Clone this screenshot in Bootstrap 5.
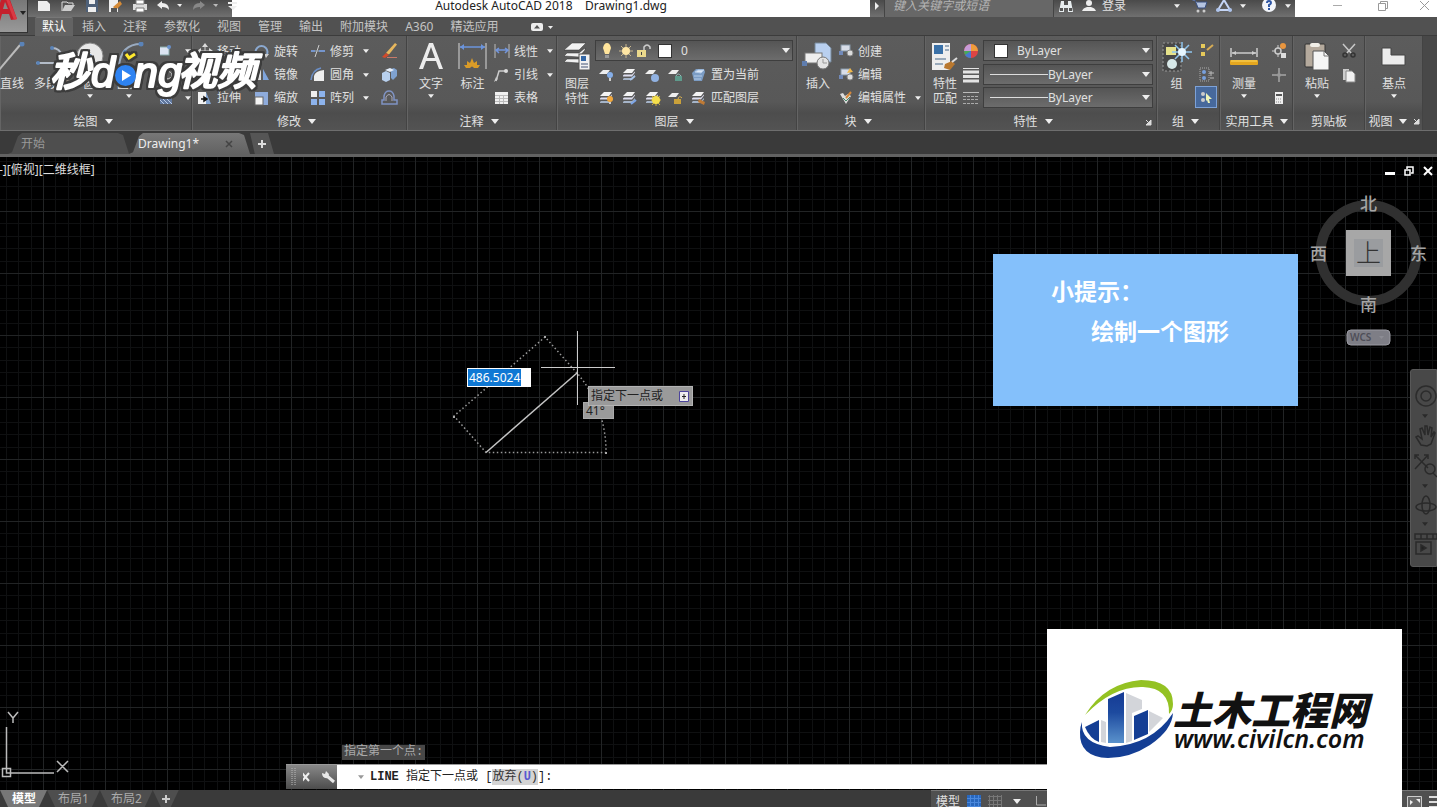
<!DOCTYPE html>
<html lang="zh-CN">
<head>
<meta charset="utf-8">
<meta name="viewport" content="width=device-width, initial-scale=1">
<title>Autodesk AutoCAD 2018 - Drawing1.dwg</title>
<link href="https://cdn.jsdelivr.net/npm/bootstrap@5.3.0/dist/css/bootstrap.min.css" rel="stylesheet">
<style>
:root { --ink:#e0e0e0; --deep:#3a3a3a; }
body { font:12px/16px "Noto Sans","Noto Sans CJK SC",sans-serif; background:#000; color:var(--ink); }
svg { display:block; flex:none; }
svg text { font-family:"Noto Sans","Noto Sans CJK SC",sans-serif; }
.i16 { width:16px; height:16px; }
.i32 { width:32px; height:32px; }
.caret { width:8px; height:5px; fill:#eee; }
.caret.sm { width:6px; height:4px; }
button { color:inherit; }
a { color:inherit; text-decoration:none; }

/* title bar */
.titlebar { height:17px; background:#fff; }
.appbtn { width:28px; height:33px; z-index:3; background:linear-gradient(#777,#999); border:0; border-right:1px solid #333; border-bottom:1px solid #333; }
.chrome { background:linear-gradient(#4a4a4a,#707070); padding-bottom:5px; }
.quick { width:232px; padding-left:36px; gap:10px; }
.doctitle { color:#222; font-size:12px; line-height:12px; }
.finder { width:170px; height:17px; border:1px solid #444; border-width:0 1px; background:#676767; color:#bbb; font-style:italic; padding:0 8px 6px; border-radius:0; }
.finder::placeholder { color:#b4b4b4; opacity:1; }
.info { width:241px; }
.signin { margin-left:-2px; line-height:12px; }
.winctl { width:142px; padding:0 3px 0 33px; }

/* ribbon tabs */
.ribbontabs { height:19px; padding-left:35px; gap:1px; background:#515151; border-bottom:1px solid #3c3c3c; }
.ribbontabs a { padding:1px 8px; color:#c4c4c4; height:19px; line-height:18px; }
.ribbontabs a.active { padding:0 7px; background:#636363; border-radius:2px 2px 0 0; color:#fff; border-top:1px solid #777; }

/* ribbon */
.ribbon { height:95px; background:#484848; border-bottom:1px solid #6e6e6e; }
.pane { background:linear-gradient(#5c5c5c,#585858 70%,#4d4d4d 82%,#535353); border-right:1px solid #434343; border-left:1px solid #646464; padding-top:3px; }
.tools { display:grid; grid-auto-flow:column; grid-template-rows:24px 23px 23px; height:70px; }
.cap { height:24px; line-height:22px; gap:7px; padding:1px 6px 0 0; }
.tool { display:flex; align-items:center; gap:4px; padding:0; border:0; border-radius:0; background:none; color:var(--ink); font-size:12px; line-height:15px; white-space:nowrap; }
.tool:hover { color:#fff; background:#6b6b6b; }
.tool .caret { margin-left:5px; }
.tool.big { grid-row:1 / span 3; flex-direction:column; gap:2px; padding-top:3px; }
.tool.big .caret { margin:1px 0 0; }
.tool.on { width:22px; height:22px; justify-content:center; background:#47699c; border:1px solid #7da2d8; }
.p-draw { width:192px; } .p-draw .tools { grid-template-columns:22px 58px 17px 62px 34px; }
.p-mod { width:215px; } .p-mod .tools { grid-template-columns:57px 56px 71px 20px; padding-left:4px; }
.p-ann { width:150px; } .p-ann .tools { grid-template-columns:40px 43px 60px; padding-left:3px; }
.p-lay { width:240px; } .p-lay .tools { grid-template-columns:36px 198px; padding-left:1px; }
.p-blk { width:128px; } .p-blk .tools { grid-template-columns:40px 84px; }
.p-prop { width:232px; } .p-prop .tools { grid-template-columns:36px 20px 170px; padding-left:1px; }
.p-grp { width:63px; } .p-grp .tools { grid-template-columns:37px 22px; }
.p-util { width:73px; } .p-util .tools { grid-template-columns:46px 20px; }
.p-clip { width:72px; } .p-clip .tools { grid-template-columns:46px 20px; }
.p-view { width:58px; } .p-view .tools { grid-template-columns:56px; }
.p-util .cap, .p-clip .cap, .p-view .cap { padding-right:0; gap:6px; }
.combo { height:21px; margin-top:1px; padding:0 2px 0 10px; gap:9px; border:1px solid #3e3e3e; background:linear-gradient(#555,#6c6c6c); }
.combo select { appearance:none; background:none; border:0; padding:0; color:var(--ink); font-size:12px; line-height:16px; min-width:0; }
.lampset { gap:2px; }
.swatch { width:14px; height:14px; background:#fff; border:1px solid #333; flex:none; }
.rule { height:1px; width:58px; background:#ddd; flex:none; }
.combo.line { gap:0; padding-left:6px; }
.iconrow { gap:7px; padding-left:4px; }

/* file tabs */
.filetabs { height:26px; padding:2px 0 0 8px; background:var(--deep); border-bottom:3px solid #626262; }
.ftab { height:21px; width:121px; padding-left:13px; line-height:21px; background:#4e4e4e; color:#999; clip-path:polygon(0 100%,4px 92%,10px 15%,14px 0,110px 0,115px 10%,100% 100%); }
.ftab.active { background:linear-gradient(#777,#626262); color:#eee; padding:0 17px 0 9px; }
.ftab.add { width:24px; padding:0; border:0; background:#555; color:#ddd; clip-path:polygon(0 0,75% 0,100% 100%,20% 100%); }

/* drawing area */
.stage { min-height:0; background:#000; overflow:hidden; }
.over { position:absolute; }
.vplabel { left:-1px; top:5px; color:#ddd; }
.vpctl { right:4px; top:9px; gap:9px; }
.tipcard { left:993px; top:97px; width:305px; height:152px; background:#84c0fb; color:#fff; font-weight:700; font-size:23px; line-height:40px; padding:17px 0 0 58px; }
.tipcard p { margin:0; }
.tipcard p + p { padding-left:40px; }
.dyn { left:467px; top:211px; width:64px; height:19px; border:1px solid #fff; padding:0 1px; font-size:12px; color:#fff; border-radius:0; background:linear-gradient(90deg,#0f78d4 53px,#fff 53px); }
.hint { left:588px; top:229px; height:20px; width:105px; padding:0 3px 0 2px; background:#9a9a9a; border:1px solid #b4b4b4; color:#222; }
.angle { left:583px; top:245px; width:31px; height:17px; padding-left:2px; line-height:15px; background:#9a9a9a; border:1px solid #aaa; color:#222; }
.cube { right:0; top:33px; }
.navrail { right:0; top:212px; width:27px; height:198px; padding:14px 0 10px 3px; background:#484848; border:1px solid #585858; border-radius:3px 0 0 3px; }
.history { left:342px; bottom:30px; height:15px; line-height:15px; padding:0 2px; background:#474747; color:#aaa; font-family:"Liberation Mono","Noto Sans CJK SC",monospace; }
.cmd { left:286px; right:200px; bottom:1px; height:25px; background:#fff; border-top:1px solid #999; color:#222; }
.cmd .grip { width:51px; background:linear-gradient(#888,#4c4c4c); padding-left:5px; gap:6px; }
.cmd .line { font-size:12px; font-family:"Liberation Mono","Noto Sans CJK SC",monospace; padding-left:21px; gap:6px; }
.cmd .opt { background:#d4d4d4; border:0; padding:0; line-height:16px; font-family:inherit; color:#333; }
.key { color:#5a5ad0; }
.brand { right:35px; bottom:0; width:355px; height:178px; background:#fff; z-index:5; }
.watermark { left:46px; top:44px; z-index:4; pointer-events:none; filter:drop-shadow(2px 0 0 #3c3c3c) drop-shadow(-2px 0 0 #3c3c3c) drop-shadow(0 2px 0 #3c3c3c) drop-shadow(0 -2px 0 #3c3c3c); }
.watermark .latin { font-family:"Liberation Sans",sans-serif; }

/* bottom bar */
.bottombar { height:17px; background:var(--deep); overflow:hidden; }
.ltab { height:17px; padding:0 11px; background:#4e4e4e; color:#aaa; border:0; line-height:17px; clip-path:polygon(0 0,100% 0,calc(100% - 8px) 100%,8px 100%); }
.ltab.active { background:#777; color:#fff; font-weight:700; padding:0 11px 0 12px; }
.ltab.plus { padding:0 8px; }
.status { width:506px; background:#505050; border-top:1px solid #777; padding:5px 0 0 5px; gap:7px; }
</style>
</head>
<body class="vh-100 d-flex flex-column overflow-hidden">
<svg width="0" height="0" class="position-absolute" aria-hidden="true">
  <defs>
    <symbol id="car" viewBox="0 0 8 5"><path d="M0 0h8L4 5z"/></symbol>
    <symbol id="sheets" viewBox="0 0 16 16"><path d="M1 6l4-4h8l-3 4z" fill="#f4f4f4"/><path d="M1 8.500l1-1h8l3-3v1L10 9.500H1z" fill="#dde"/><path d="M1 12l1-1h8l3-3v1.500L10 13H1z" fill="#a5b4c8"/></symbol>
    <symbol id="sheet" viewBox="0 0 16 16"><path d="M0 7l4-4h7l-3 4z" fill="#eee"/></symbol>
    <symbol id="block" viewBox="0 0 16 16"><rect x="3" y="2" width="9" height="6" fill="#d8dde8" stroke="#8899aa"/><rect x="1" y="8" width="4" height="4" fill="#7189b8"/><circle cx="12" cy="10" r="3" fill="#ddd" stroke="#888"/></symbol>
    <linearGradient id="tower" x1="0" y1="0" x2="0" y2="1"><stop offset="0" stop-color="#153a94"/><stop offset=".4" stop-color="#1d4a9f"/><stop offset="1" stop-color="#5a92cc"/></linearGradient>
  </defs>
</svg>

<header class="position-relative">
  <button class="appbtn position-absolute top-0 start-0 p-0" aria-label="应用程序菜单">
    <svg width="28" height="32" viewBox="0 0 28 32"><path d="M-6 21L2-3h7l8 22-6 1-2-6H2l-2 7z" fill="#c4202c"/><path d="M3 9l2-7 3 7z" fill="#888"/><path d="M9-1l8 20-3 1L6-1z" fill="#d93a44"/><path d="M20 11h6l-3 4z" fill="#222"/></svg>
  </button>
  <div class="titlebar d-flex align-items-stretch">
    <div class="chrome quick d-flex align-items-center">
      <svg width="15" height="14" viewBox="0 0 15 14"><path d="M2 2h9l3 3v7H2z" fill="#eee"/></svg>
      <svg width="15" height="14" viewBox="0 0 15 14"><path d="M1 12V3h5l1 1h5v3" fill="none" stroke="#ddd"/><path d="M1 12l3-6h10l-4 6z" fill="#ccc"/></svg>
      <svg width="12" height="14" viewBox="0 0 12 14"><path d="M0 1h12v12H0z" fill="#4e6078"/><path d="M3 1h6v4H3zM2 8h8v5H2z" fill="#eee"/></svg>
      <svg width="15" height="14" viewBox="0 0 15 14"><path d="M1 1h9v12H1z" fill="#eee"/><path d="M5 8l7-6 2 3-6 6z" fill="#d58a36"/><path d="M3 9h6v4H3z" fill="#555"/></svg>
      <svg width="14" height="14" viewBox="0 0 14 14"><path d="M0 5h14v6H0z" fill="#ddd"/><path d="M3 1h8v4H3zM3 9h8v4H3z" fill="#fff" stroke="#777"/></svg>
      <svg width="26" height="14" viewBox="0 0 26 14"><path d="M0 6l5-4v2q7 0 7 7q-2-3-7-3v2z" fill="#eee"/><path d="M20 5h5l-2 3z" fill="#eee"/></svg>
      <svg width="25" height="14" viewBox="0 0 25 14"><path d="M12 6L7 2v2q-7 0-7 7q2-3 7-3v2z" fill="#888"/><path d="M20 5h5l-2 3z" fill="#bbb"/></svg>
      <svg width="9" height="14" viewBox="0 0 9 14"><path d="M0 3h9v2H0zM0 7h9l-4 4z" fill="#eee"/></svg>
    </div>
    <div class="doctitle flex-grow-1 text-center">Autodesk AutoCAD 2018 &nbsp;&nbsp; Drawing1.dwg</div>
    <div class="chrome d-flex align-items-center ps-1"><svg width="10" height="12" viewBox="0 0 10 12"><path d="M1 2l4 4-4 4z" fill="#eee"/></svg></div>
    <input class="finder" type="search" placeholder="键入关键字或短语" aria-label="键入关键字或短语">
    <div class="chrome info d-flex align-items-center ps-1 gap-2">
      <svg width="16" height="14" viewBox="0 0 16 14"><path d="M1 13l2-11h3v11zM15 13L13 2h-3v11zM6 6h4v3H6z" fill="#e8eef0"/><path d="M2 9h3v3H2zM11 9h3v3h-3z" fill="#555"/></svg>
      <svg width="14" height="14" viewBox="0 0 14 14"><circle cx="7" cy="4" r="3" fill="#eee"/><path d="M0 12q1-3 5-4h4q4 1 5 4z" fill="#eee"/></svg>
      <a href="#" class="signin text-nowrap">登录</a>
      <svg class="caret sm ms-auto"><use href="#car"/></svg>
      <svg class="ms-1" width="16" height="14" viewBox="0 0 16 14"><path d="M0 1h3l3 8h7l2-6H5" fill="#b5c4e0" stroke="#384f80"/><circle cx="6" cy="12" r="1.500" fill="#ccc"/><circle cx="12" cy="12" r="1.500" fill="#ccc"/></svg>
      <svg width="16" height="14" viewBox="0 0 16 14"><path d="M8 1l6 10H2z" fill="none" stroke="#c5d5f5" stroke-width="2"/><circle cx="2" cy="11" r="2" fill="#aec4ec"/><circle cx="14" cy="11" r="2" fill="#aec4ec"/></svg>
      <svg class="caret sm"><use href="#car"/></svg>
      <svg class="ms-2" width="15" height="14" viewBox="0 0 15 14"><circle cx="7" cy="6" r="7" fill="#f2f5fa"/><path d="M5 4q0-2 2-2t2 2q0 1-2 2v2M7 9v2" fill="none" stroke="#2e56a5" stroke-width="2"/></svg>
      <svg class="caret sm me-1"><use href="#car"/></svg>
    </div>
    <div class="winctl d-flex justify-content-between align-items-start">
      <svg width="20" height="12" viewBox="0 0 20 12"><path d="M5 5.500h9" stroke="#aaa"/></svg>
      <svg width="12" height="12" viewBox="0 0 12 12"><path d="M1.500 3.500h7v7h-7zM3.500 3V1.500h7v7H9" fill="none" stroke="#999"/></svg>
      <svg width="16" height="12" viewBox="0 0 16 12"><path d="M2 1l9 9M11 1l-9 9" stroke="#999"/></svg>
    </div>
  </div>

  <nav class="ribbontabs d-flex" aria-label="功能区">
    <a href="#" class="active">默认</a><a href="#">插入</a><a href="#">注释</a><a href="#">参数化</a><a href="#">视图</a><a href="#">管理</a><a href="#">输出</a><a href="#">附加模块</a><a href="#">A360</a><a href="#">精选应用</a>
    <svg class="ms-4 mt-1" width="24" height="12" viewBox="0 0 24 12"><rect x="0" y="2" width="12" height="8" rx="2" fill="#eee"/><path d="M3 7.500h6L6 4z" fill="#555"/><path d="M17 5h5l-2.500 3z" fill="#eee"/></svg>
  </nav>

  <div class="ribbon d-flex">
    <section class="pane p-draw">
      <div class="tools">
        <button class="btn tool big"><svg class="i32" viewBox="0 0 32 32"><path d="M3 28L24 3" stroke="#bbb" stroke-width="2"/><circle cx="26" cy="2" r="2.500" fill="#5a83b8"/></svg>直线</button>
        <button class="btn tool big"><svg class="i32" viewBox="0 0 32 32"><path d="M0 21h18M16 6q8 0 10 8" fill="none" stroke="#b4bcc8" stroke-width="2"/><circle cx="16" cy="6" r="2" fill="#5a83b8"/><circle cx="2" cy="21" r="2" fill="#5a83b8"/></svg>多段线</button>
        <button class="btn tool big"><svg class="i32" viewBox="0 0 32 32"><circle cx="16" cy="14" r="13" fill="#e8e8e8" stroke="#888"/><circle cx="16" cy="14" r="2" fill="#5a83b8"/></svg>圆<svg class="caret sm"><use href="#car"/></svg></button>
        <button class="btn tool big"><svg class="i32" viewBox="0 0 32 32"><path d="M6 24Q8 2 28 2" fill="none" stroke="#9aabc0" stroke-width="2"/><circle cx="28" cy="2" r="2.500" fill="#5a83b8"/><circle cx="12" cy="10" r="2" fill="#5a83b8"/></svg>圆弧<svg class="caret sm"><use href="#car"/></svg></button>
        <button class="btn tool" aria-label="矩形"><svg class="i16" viewBox="0 0 16 16"><rect x="-2" y="4" width="11" height="8" fill="#dce4f2" stroke="#8aa"/><circle cx="9" cy="4" r="2" fill="#6a91cc"/></svg><svg class="caret sm"><use href="#car"/></svg></button>
        <button class="btn tool" aria-label="椭圆"><svg class="i16" viewBox="0 0 16 16"><ellipse cx="6" cy="8" rx="6" ry="4" fill="none" stroke="#ccc"/></svg><svg class="caret sm"><use href="#car"/></svg></button>
        <button class="btn tool" aria-label="图案填充"><svg class="i16" viewBox="0 0 16 16"><path d="M0 2h12v12H0z" fill="#61789e"/><path d="M0 6l8 8M0 2l12 12M5 2l7 7M0 10l4 4" stroke="#b9cbe8"/></svg><svg class="caret sm"><use href="#car"/></svg></button>
      </div>
      <div class="cap d-flex justify-content-center align-items-center">绘图<svg class="caret"><use href="#car"/></svg></div>
    </section>

    <section class="pane p-mod">
      <div class="tools">
        <button class="btn tool"><svg class="i16" viewBox="0 0 16 16"><path d="M8 0l3 4H5zM8 16l3-4H5zM0 8l4-3v6zM16 8l-4-3v6z" fill="#ddd"/><path d="M8 3v10M3 8h10" stroke="#ccc"/></svg>移动</button>
        <button class="btn tool"><svg class="i16" viewBox="0 0 16 16"><circle cx="5" cy="6" r="4" fill="none" stroke="#ccc"/><circle cx="10" cy="10" r="4" fill="none" stroke="#7da4d8"/></svg>复制</button>
        <button class="btn tool"><svg class="i16" viewBox="0 0 16 16"><path d="M1 2h8v12H1z" fill="#f2f2f2"/><path d="M9 2l5 12H9z" fill="#86a7d4"/><path d="M4 9h5M7 7l3 2-3 2z" stroke="#111" stroke-width="1.500"/></svg>拉伸</button>
        <button class="btn tool"><svg class="i16" viewBox="0 0 16 16"><path d="M3 13A6 6 0 1 1 12 13" fill="none" stroke="#8ba9d0" stroke-width="2"/><path d="M10 11l5 0-3 4z" fill="#ccc"/></svg>旋转</button>
        <button class="btn tool"><svg class="i16" viewBox="0 0 16 16"><path d="M7 2v11H1z" fill="#ddd"/><path d="M9 2v11h6z" fill="#7fa5dc"/></svg>镜像</button>
        <button class="btn tool"><svg class="i16" viewBox="0 0 16 16"><rect x="1" y="2" width="13" height="13" fill="#8eabdb"/><rect x="1" y="7" width="8" height="8" fill="#f4f4f4" stroke="#666"/></svg>缩放</button>
        <button class="btn tool"><svg class="i16" viewBox="0 0 16 16"><path d="M1 8h4M9 8h6" stroke="#7595cc" stroke-width="2"/><path d="M9 2L5 14" stroke="#ccc"/><path d="M5 8h4" stroke="#9ab"/></svg>修剪<svg class="caret sm"><use href="#car"/></svg></button>
        <button class="btn tool"><svg class="i16" viewBox="0 0 16 16"><path d="M4 14V9q1-5 10-6v11z" fill="#eee"/><path d="M1 13Q2 3 11 1" fill="none" stroke="#6b8fc8" stroke-width="1.500"/></svg>圆角<svg class="caret sm"><use href="#car"/></svg></button>
        <button class="btn tool"><svg class="i16" viewBox="0 0 16 16"><path d="M1 1h6v6H1z" fill="#eee"/><path d="M9 1h6v6H9zM1 9h6v6H1zM9 9h6v6H9z" fill="#8db3ec"/></svg>阵列<svg class="caret sm"><use href="#car"/></svg></button>
        <button class="btn tool" aria-label="删除"><svg width="18" height="18" viewBox="0 0 18 18"><path d="M5 11L14 1l2 1.500-8 10z" fill="#e7b75d"/><path d="M1 15l4-4 3 2-4 3z" fill="#d34a2b"/><path d="M6 15.500h10" stroke="#c87a6a"/></svg></button>
        <button class="btn tool" aria-label="分解"><svg width="18" height="18" viewBox="0 0 18 18"><path d="M1 7l4-2 4 2v7l-4 2-4-2z" fill="#b8d0ee"/><path d="M10 3l3-1 3 2v6l-4 4-2-2z" fill="#7fa2d0"/><path d="M4 4l5-2 4 2-4 2z" fill="#e5eefa"/></svg></button>
        <button class="btn tool" aria-label="偏移"><svg width="18" height="18" viewBox="0 0 18 18"><path d="M1 15h15v-4h-3V7q-1-5-5-5t-5 5v4H1z" fill="none" stroke="#7f93c4" stroke-width="1.500"/><path d="M5 12V8q3-5 6 0v4" fill="none" stroke="#aab"/></svg></button>
      </div>
      <div class="cap d-flex justify-content-center align-items-center">修改<svg class="caret"><use href="#car"/></svg></div>
    </section>

    <section class="pane p-ann">
      <div class="tools">
        <button class="btn tool big"><svg class="i32" viewBox="0 0 32 32"><path d="M4 27L14 1h4l10 26h-4l-3-8H11l-3 8zM12 16h8L16 5z" fill="#ececec"/></svg>文字<svg class="caret sm"><use href="#car"/></svg></button>
        <button class="btn tool big"><svg class="i32" viewBox="0 0 32 32"><path d="M2 1v26M29 1v26" stroke="#999" stroke-width="2"/><path d="M3 5h25" stroke="#6b94dc" stroke-width="1.500"/><path d="M3 5l4-3v6zM28 5l-4-3v6z" fill="#6b94dc"/><path d="M9 26l-2-3 3 0 0-4 3 2 2-5 2 5 3-2 0 4 3 0-2 3h-4q-2-3-4 0z" fill="#d99b28"/></svg>标注</button>
        <button class="btn tool"><svg class="i16" viewBox="0 0 16 16"><path d="M1 1v14M15 1v14" stroke="#bbb"/><path d="M2 7h12M5 5L2 7l3 3M11 5l3 2-3 3" fill="none" stroke="#7396dc" stroke-width="1.500"/></svg>线性<svg class="caret sm"><use href="#car"/></svg></button>
        <button class="btn tool"><svg class="i16" viewBox="0 0 16 16"><path d="M2 14L5 4h6" fill="none" stroke="#ccc" stroke-width="1.500"/><circle cx="12" cy="4" r="2" fill="#ddd"/><path d="M0 15l2-5 2 2z" fill="#ccc"/></svg>引线<svg class="caret sm"><use href="#car"/></svg></button>
        <button class="btn tool"><svg class="i16" viewBox="0 0 16 16"><path d="M1 2h13v12H1z" fill="#f0f0f0"/><path d="M1 5.500h13M1 8.500h13M1 11.500h13M5.500 5v9M9.500 5v9" stroke="#bbb"/></svg>表格</button>
      </div>
      <div class="cap d-flex justify-content-center align-items-center">注释<svg class="caret"><use href="#car"/></svg></div>
    </section>

    <section class="pane p-lay">
      <div class="tools">
        <button class="btn tool big"><svg class="i32" viewBox="0 0 32 32"><path d="M3 8l8-7h14l-7 7zM3 14l3-3h12l6-5v2l-6 7zM3 20l3-3h12l4-4v2l-4 6z" fill="#f2f2f2" stroke="#333" stroke-width=".5"/><rect x="18" y="12" width="11" height="16" fill="#f2f2f2" stroke="#555"/><path d="M20 14h5v5h-5z" fill="#3568a6"/><path d="M20 22h7M20 25h7" stroke="#457"/></svg><span>图层<br>特性</span></button>
        <label class="combo d-flex align-items-center ps-1">
          <span class="lampset d-flex align-items-center">
          <svg class="i16" viewBox="0 0 16 16"><path d="M5 11L3 5q1-5 4-5t4 5l-2 6z" fill="#ffe49b"/><path d="M5 12h4v3H5z" fill="#999"/></svg>
          <svg class="i16" viewBox="0 0 16 16"><path d="M8 1v14M1 8h14M3 3l10 10M13 3L3 13" stroke="#c9b78f"/><circle cx="8" cy="8" r="4" fill="#ffe6a4"/></svg>
          <svg class="i16" viewBox="0 0 16 16"><path d="M1 7h9v7H1z" fill="#ead88c"/><path d="M8 7V4q3-4 6 0v2" fill="none" stroke="#ccc" stroke-width="1.500"/><path d="M5 9h1v3H5z" fill="#444"/></svg>
          <span class="swatch ms-1"></span>
          </span>
          <select class="flex-grow-1" aria-label="当前图层"><option>0</option></select>
          <svg class="caret"><use href="#car"/></svg>
        </label>
        <div class="iconrow d-flex align-items-center">
          <svg class="i16" viewBox="0 0 16 16"><use href="#sheet"/><circle cx="11" cy="8" r="3" fill="#85aee8"/><path d="M10 11h2v3h-2z" fill="#ccc"/></svg>
          <svg class="i16" viewBox="0 0 16 16"><use href="#sheets"/><path d="M8 13l5-4" stroke="#a9c4e9" stroke-width="2"/></svg>
          <svg class="i16" viewBox="0 0 16 16"><use href="#sheet"/><circle cx="10" cy="11" r="4" fill="#91b2e2"/></svg>
          <svg class="i16" viewBox="0 0 16 16"><use href="#sheet"/><rect x="7" y="9" width="7" height="5" fill="#5f9a8c"/><path d="M8 9q2-4 5 0" fill="none" stroke="#9bb"/></svg>
          <button class="btn tool"><svg class="i16" viewBox="0 0 16 16"><path d="M1 6l4-4h8l1 3-3 9H3z" fill="#7b9cc4"/><path d="M4 5l3-2h6l-3 3zM3 9h8M3 12h7" stroke="#b5cce8" fill="#dde8f5"/></svg>置为当前</button>
        </div>
        <div class="iconrow d-flex align-items-center">
          <svg class="i16" viewBox="0 0 16 16"><use href="#sheets"/><circle cx="11" cy="9" r="3" fill="#f2a83b"/><path d="M10 12h2v2h-2z" fill="#ccc"/></svg>
          <svg class="i16" viewBox="0 0 16 16"><use href="#sheets"/><path d="M9 14l5-4" stroke="#7ea6e8" stroke-width="2"/></svg>
          <svg class="i16" viewBox="0 0 16 16"><use href="#sheets"/><path d="M11 5v11M6 10h10M7 6l8 9M15 6l-8 9" stroke="#d3b13b"/><circle cx="11" cy="10" r="4" fill="#f5df4b"/></svg>
          <svg class="i16" viewBox="0 0 16 16"><use href="#sheet"/><path d="M6 9h7v5H6z" fill="#caa13a"/><path d="M10 9q1-4 4-1" fill="none" stroke="#dcb452"/></svg>
          <button class="btn tool"><svg class="i16" viewBox="0 0 16 16"><use href="#sheets"/><path d="M8 9l6 3-1 3-6-3z" fill="#bf7a35"/></svg>匹配图层</button>
        </div>
      </div>
      <div class="cap d-flex justify-content-center align-items-center">图层<svg class="caret"><use href="#car"/></svg></div>
    </section>

    <section class="pane p-blk">
      <div class="tools">
        <button class="btn tool big"><svg class="i32" viewBox="0 0 32 32"><path d="M13 1h11l5 5v14H13z" fill="#b9d0f0" stroke="#789"/><rect x="3" y="11" width="17" height="10" fill="#eee" stroke="#777"/><rect x="0" y="19" width="5" height="5" fill="#5f7dae"/><circle cx="21" cy="21" r="6" fill="#e4e4e4" stroke="#777"/><path d="M21 17v4h4" stroke="#999" fill="none"/></svg>插入</button>
        <button class="btn tool"><svg class="i16" viewBox="0 0 16 16"><use href="#block"/></svg>创建</button>
        <button class="btn tool"><svg class="i16" viewBox="0 0 16 16"><use href="#block"/><path d="M9 6l3-5 3 4z" fill="#f0b84a"/></svg>编辑</button>
        <button class="btn tool"><svg class="i16" viewBox="0 0 16 16"><path d="M2 4l3-1 2 3 3-2 3 2-5 8z" fill="#ddd"/><path d="M8 8l5-6" stroke="#d5883b" stroke-width="2"/><path d="M5 8l3 3 4-4" fill="none" stroke="#486"/></svg>编辑属性<svg class="caret sm"><use href="#car"/></svg></button>
      </div>
      <div class="cap d-flex justify-content-center align-items-center">块<svg class="caret"><use href="#car"/></svg></div>
    </section>

    <section class="pane p-prop position-relative">
      <div class="tools">
        <button class="btn tool big"><svg class="i32" viewBox="0 0 32 32"><rect x="3" y="1" width="18" height="27" fill="#eee"/><path d="M5 3h9v9H5z" fill="#3a71a8"/><path d="M16 4h4M16 8h4M6 17h11M6 22h8" stroke="#468"/><path d="M16 22l7-3 3 3-5 6-6-2z" fill="#b9782f"/><path d="M23 20l5-4" stroke="#ddd" stroke-width="2"/></svg><span>特性<br>匹配</span></button>
        <svg class="i16 align-self-center" viewBox="0 0 16 16"><circle cx="8" cy="8" r="7" fill="#d44"/><path d="M8 8L1 8a7 7 0 0 1 7-7z" fill="#c79bd8"/><path d="M8 8V1a7 7 0 0 1 7 7z" fill="#ef9c3b"/><path d="M8 8H1a7 7 0 0 0 7 7z" fill="#46a95b"/><path d="M8 8v7a7 7 0 0 1-6-3z" fill="#4a76d0"/></svg>
        <svg class="i16 align-self-center" viewBox="0 0 16 16"><path d="M0 1.500h16" stroke="#e4e4e4"/><path d="M0 5h16M0 9.500h16M0 14h16" stroke="#e4e4e4" stroke-width="3"/></svg>
        <svg class="i16 align-self-center" viewBox="0 0 16 16"><path d="M0 2.500h16" stroke="#bbb"/><path d="M0 6.500h16M0 9.500h16M0 13.500h16" stroke="#aaa" stroke-dasharray="3 1"/></svg>
        <label class="combo d-flex align-items-center"><span class="swatch"></span><select class="flex-grow-1" aria-label="颜色"><option>ByLayer</option></select><svg class="caret"><use href="#car"/></svg></label>
        <label class="combo line d-flex align-items-center"><span class="rule"></span><select class="flex-grow-1" aria-label="线宽"><option>ByLayer</option></select><svg class="caret"><use href="#car"/></svg></label>
        <label class="combo line d-flex align-items-center"><span class="rule"></span><select class="flex-grow-1" aria-label="线型"><option>ByLayer</option></select><svg class="caret"><use href="#car"/></svg></label>
      </div>
      <div class="cap d-flex justify-content-center align-items-center pe-3">特性<svg class="caret"><use href="#car"/></svg></div>
      <svg class="over end-0 bottom-0 me-1 mb-1" width="7" height="7" viewBox="0 0 7 7"><path d="M1 1l4 4M6 1v5H1z" stroke="#ddd" fill="#ddd"/></svg>
    </section>

    <section class="pane p-grp">
      <div class="tools">
        <button class="btn tool big"><svg class="i32" viewBox="0 0 32 32"><rect x="2" y="1" width="18" height="28" fill="#484848" stroke="#999" stroke-dasharray="2 2"/><path d="M5 5h10v8H5z" fill="#e6e28a"/><circle cx="11" cy="22" r="5" fill="#d8e8e8"/><path d="M21 0v20M11 10h20M14 3l14 14M28 3L14 17" stroke="#8fc5ee" stroke-width="1.500"/><circle cx="21" cy="10" r="4" fill="#e6f6ff"/></svg>组</button>
        <svg class="i16 align-self-center mx-1" viewBox="0 0 16 16"><path d="M2 1h4v4H2zM2 9h4v4H2z" fill="#e6c95a"/><path d="M8 7l6-5" stroke="#d5ab55" stroke-width="2"/></svg>
        <svg class="i16 align-self-center mx-1" viewBox="0 0 16 16"><rect x="1" y="1" width="9" height="13" fill="none" stroke="#aaa" stroke-dasharray="1 1"/><circle cx="5" cy="5" r="2" fill="#78a0dc"/><circle cx="5" cy="11" r="2" fill="#78a0dc"/><path d="M10 6h5M12 4v5M11 11h4" stroke="#bbb"/></svg>
        <button class="btn tool on" aria-label="组选择"><svg class="i16" viewBox="0 0 16 16"><circle cx="5" cy="5" r="2" fill="#ccc"/><circle cx="5" cy="11" r="2" fill="#ccc"/><path d="M8 4l6 6-3 0 1 4-2 0-1-3-1 1z" fill="#eef5b8"/></svg></button>
      </div>
      <div class="cap d-flex justify-content-center align-items-center">组<svg class="caret"><use href="#car"/></svg></div>
    </section>

    <section class="pane p-util">
      <div class="tools">
        <button class="btn tool big"><svg class="i32" viewBox="0 0 32 32"><path d="M3 6v9M29 6v9M4 11h24" stroke="#ccc" stroke-width="1.500"/><path d="M4 11l4-2v4zM28 11l-4-2v4z" fill="#ccc"/><rect x="2" y="18" width="28" height="5" rx="1" fill="#e5a71f"/><path d="M3 19h26" stroke="#ffda60"/></svg>测量<svg class="caret sm"><use href="#car"/></svg></button>
        <svg class="i16 align-self-center ms-1" viewBox="0 0 16 16"><circle cx="7" cy="8" r="3" fill="none" stroke="#ccc" stroke-width="1.500"/><path d="M1 8h4M7 2v3M7 11v3" stroke="#ccc"/><circle cx="12" cy="3" r="3" fill="#e9963f"/><rect x="10" y="10" width="5" height="5" fill="#ddd"/></svg>
        <svg class="i16 align-self-center ms-1" viewBox="0 0 16 16"><path d="M8 1v14M1 8h14" stroke="#ccc"/><circle cx="8" cy="8" r="2" fill="#999"/></svg>
        <svg class="i16 align-self-center ms-1" viewBox="0 0 16 16"><rect x="4" y="2" width="8" height="12" fill="#eee"/><path d="M5 5h6" stroke="#555" stroke-width="2"/><path d="M5 9h6M5 12h6" stroke="#888" stroke-dasharray="1 1"/></svg>
      </div>
      <div class="cap d-flex justify-content-center align-items-center text-nowrap">实用工具<svg class="caret"><use href="#car"/></svg></div>
    </section>

    <section class="pane p-clip">
      <div class="tools">
        <button class="btn tool big"><svg class="i32" viewBox="0 0 32 32"><rect x="4" y="2" width="20" height="23" rx="1" fill="#b5aa9d" stroke="#333"/><rect x="9" y="1" width="10" height="4" rx="2" fill="#f1efe8"/><path d="M12 9h11l5 5v14H12z" fill="#f5f5f5" stroke="#555"/><path d="M23 9v5h5" fill="none" stroke="#777"/></svg>粘贴<svg class="caret sm"><use href="#car"/></svg></button>
        <svg class="i16 align-self-center" viewBox="0 0 16 16"><path d="M3 1l9 10M15 1L6 11" stroke="#c8c8c8" stroke-width="1.500"/><circle cx="5" cy="12" r="2" fill="none" stroke="#333" stroke-width="1.500"/><circle cx="13" cy="12" r="2" fill="none" stroke="#333" stroke-width="1.500"/></svg>
        <svg class="i16 align-self-center" viewBox="0 0 16 16"><path d="M3 2h6v11H3z" fill="#ccc"/><path d="M6 4h6l3 3v8H6z" fill="#f1f1f1" stroke="#888"/></svg>
      </div>
      <div class="cap d-flex justify-content-center align-items-center">剪贴板</div>
    </section>

    <section class="pane p-view">
      <div class="tools">
        <button class="btn tool big"><svg class="i32" viewBox="0 0 32 32"><path d="M4 6h9v7h14v10H4z" fill="#ececec" stroke="#444"/></svg>基点<svg class="caret sm"><use href="#car"/></svg></button>
      </div>
      <div class="cap d-flex justify-content-center align-items-center">视图<svg class="caret"><use href="#car"/></svg><svg width="7" height="7" viewBox="0 0 7 7"><path d="M1 1l4 4M6 1v5H1z" stroke="#ddd" fill="#ddd"/></svg></div>
    </section>
  </div>

  <nav class="filetabs d-flex" aria-label="图形文件">
    <a href="#" class="ftab">开始</a>
    <a href="#" class="ftab active d-flex align-items-center justify-content-between"><span>Drawing1*</span><svg width="8" height="8" viewBox="0 0 8 8"><path d="M1 1l6 6M7 1L1 7" stroke="#444" stroke-width="1.500"/></svg></a>
    <button class="ftab add" aria-label="新图形"><svg class="mx-auto" width="10" height="10" viewBox="0 0 10 10"><path d="M5 1v8M1 5h8" stroke="#ddd" stroke-width="2"/></svg></button>
  </nav>

  <svg class="over watermark" width="224" height="60" viewBox="46 44 224 60" role="img" aria-label="秒dong视频">
    <g fill="#fff" stroke="#fff" stroke-width="2" stroke-linejoin="round" font-style="italic">
      <text x="50" y="86" font-size="40" font-weight="500">秒</text>
      <text class="latin" x="91" y="87" font-size="43">d</text>
      <text class="latin" x="134" y="87" font-size="43">ng</text>
      <text x="178" y="85" font-size="39" font-weight="500">视频</text>
    </g>
    <circle cx="125.500" cy="75.500" r="10.500" fill="#2e83f2"/>
    <path d="M122 70v11l9-5.500z" fill="#fff"/>
    <path d="M126 54l3 4 6-4" fill="none" stroke="#ffe92e" stroke-width="3"/>
  </svg>
</header>

<main class="stage flex-grow-1 position-relative">
  <svg class="over top-0 start-0" width="100%" height="100%">
    <defs>
      <pattern id="grid" width="62" height="62" x="43" y="54" patternUnits="userSpaceOnUse">
        <path d="M12.500 0v62M25.500 0v62M37.500 0v62M50.500 0v62M0 12.500h62M0 25.500h62M0 37.500h62M0 50.500h62" stroke="#0f1011"/>
        <path d="M.5 0v62M0 .5h62" stroke="#222425"/>
      </pattern>
    </defs>
    <rect width="100%" height="100%" fill="url(#grid)"/>
    <g transform="translate(0 -157)" fill="none">
      <path d="M577 373L545 337 454 416 486 452.500H606A120 120 0 0 0 577 373" stroke="#999" stroke-width="1.500" stroke-dasharray="1.500 2.500"/>
      <path d="M486 452.500L577 373" stroke="#c4c4c4" stroke-width="1.500"/>
      <path d="M541 367.500h74M577.500 331v74" stroke="#ccc"/>
      <path d="M544 336h2v2h-2zM453 416h2v2h-2zM605 452h2v2h-2z" fill="#aaa"/>
    </g>
  </svg>

  <div class="over vplabel text-nowrap">-][俯视][二维线框]</div>
  <div class="over vpctl d-flex">
    <svg width="10" height="10" viewBox="0 0 10 10"><path d="M0 6h10v3H0z" fill="#fff"/></svg>
    <svg width="10" height="10" viewBox="0 0 10 10"><path d="M1 4h5v5H1zM3 3V1h6v6H7" fill="none" stroke="#fff" stroke-width="1.500"/></svg>
    <svg width="10" height="10" viewBox="0 0 10 10"><path d="M1 1l8 8M9 1L1 9" stroke="#fff" stroke-width="2"/></svg>
  </div>

  <div class="over tipcard"><p>小提示：</p><p>绘制一个图形</p></div>

  <div class="over angle">41°</div>
  <input class="over dyn" value="486.5024" aria-label="长度">
  <div class="over hint d-flex align-items-center justify-content-between"><span>指定下一点或</span><svg width="10" height="11" viewBox="0 0 10 11"><path d="M.5.500h9v10h-9z" fill="#eee" stroke="#4c449c"/><path d="M5 3v5M3 5.500h4" stroke="#222"/></svg></div>

  <svg class="over cube" width="127" height="160" viewBox="1310 190 127 160">
    <circle cx="1368.500" cy="253" r="48" fill="none" stroke="#303030" stroke-width="10"/>
    <path d="M1346 230h45v46h-45z" fill="#a7a7a7"/><path d="M1354 239h29v28h-29z" fill="#9a9c9f"/>
    <text x="1356" y="262" font-size="25" fill="#333" font-weight="300">上</text>
    <g font-size="17" fill="#a5a5a5" font-weight="500"><text x="1360" y="210">北</text><text x="1310" y="260">西</text><text x="1410" y="260">东</text><text x="1360" y="311">南</text></g>
    <rect x="1347" y="330" width="43" height="15" rx="4" fill="#7e7e86" stroke="#9a9aa2"/>
    <text x="1350" y="341" font-size="10" font-weight="600" fill="#4e4e58">WCS</text><path d="M1379 336h5l-2.500 3z" fill="#8c8c94"/>
  </svg>

  <div class="over navrail d-flex flex-column justify-content-between">
    <svg width="24" height="24" viewBox="0 0 24 24" fill="none" stroke="#2c2c2c" stroke-width="1.500"><circle cx="12" cy="12" r="10"/><circle cx="12" cy="12" r="5"/></svg>
    <svg class="caret sm ms-2" style="fill:#2a2a2a"><use href="#car"/></svg>
    <svg width="24" height="24" viewBox="0 0 24 24" fill="none" stroke="#2a2a2a" stroke-width="1.500"><path d="M7 21L2 13l2-1 4 3L6 5l2-1 3 7V2h2l1 9 2-8 2 1-1 9 3-5 1 1-4 11-4 2z"/></svg>
    <svg width="24" height="24" viewBox="0 0 24 24" fill="none" stroke="#2a2a2a" stroke-width="1.500"><path d="M1 1l13 13M14 1L1 15M1 5V1h4M10 1h4v4"/><circle cx="16" cy="15" r="5"/><path d="M19 19l4 4"/></svg>
    <svg class="caret sm ms-2" style="fill:#2a2a2a"><use href="#car"/></svg>
    <svg width="24" height="22" viewBox="0 0 24 22" fill="none" stroke="#2a2a2a" stroke-width="1.500"><ellipse cx="12" cy="13" rx="10" ry="4"/><ellipse cx="12" cy="11" rx="4" ry="9"/></svg>
    <svg class="caret sm ms-2" style="fill:#2a2a2a"><use href="#car"/></svg>
    <svg width="24" height="24" viewBox="0 0 24 24" fill="none" stroke="#2a2a2a" stroke-width="1.500"><path d="M1 2h22v5H1zM7 2v5M13 2v5M19 2v5M2 10h15v12H2z"/><path d="M7 13l5 3-5 3z" fill="#222"/></svg>
  </div>

  <svg class="over start-0 bottom-0" width="75" height="85" viewBox="0 705 75 85" fill="none" stroke="#bbb">
    <path d="M6.500 727v46H54M2.500 768.500h8v8h-8zM8 712l5 6 5-6M13 718v5M57 761l11 11M68 761l-11 11" stroke-width="1.500"/>
  </svg>

  <div class="over history">指定第一个点:</div>
  <div class="over cmd d-flex">
    <div class="grip d-flex align-items-center">
      <svg width="6" height="18" viewBox="0 0 6 18"><path d="M1 0v18M4 0v18" stroke="#bbb" stroke-dasharray="1 1"/></svg>
      <svg width="13" height="10" viewBox="0 0 13 10"><path d="M-1 1l7 8M6 1L-1 9" stroke="#eee" stroke-width="2"/></svg>
      <svg width="15" height="14" viewBox="0 0 15 14"><path d="M5 6l7 6" stroke="#e8e8e8" stroke-width="3"/><path d="M0 3q0 6 6 5l1-4-3-3-1 3z" fill="#e8e8e8"/></svg>
    </div>
    <div class="line d-flex align-items-center flex-grow-1">
      <svg class="caret sm" style="fill:#999"><use href="#car"/></svg>
      <label for="cmdline" class="text-nowrap"><b>LINE</b> 指定下一点或 [<button class="opt">放弃(<b class="key">U</b>)</button>]:</label>
      <input id="cmdline" class="border-0 bg-transparent p-0 flex-grow-1">
    </div>
  </div>
</main>

<footer class="bottombar d-flex justify-content-between">
  <div class="d-flex">
    <button class="ltab active">模型</button><button class="ltab">布局1</button><button class="ltab">布局2</button>
    <button class="ltab plus" aria-label="新建布局"><svg width="10" height="10" viewBox="0 0 10 10"><path d="M5 1v8M1 5h8" stroke="#ccc" stroke-width="2"/></svg></button>
  </div>
  <div class="status d-flex align-items-center">
    <span>模型</span>
    <svg width="14" height="14" viewBox="0 0 14 14"><path d="M0 0h14v14H0z" fill="#2867bd"/><path d="M3.500 0v14M7.500 0v14M11.500 0v14M0 3.500h14M0 7.500h14M0 11.500h14" stroke="#4a88dc"/></svg>
    <svg width="14" height="14" viewBox="0 0 14 14"><path d="M1.500 0v14M5.500 0v14M9.500 0v14M13.500 0v14M0 1.500h14M0 5.500h14M0 9.500h14" stroke="#777"/></svg>
    <svg class="caret mx-1"><use href="#car"/></svg>
    <svg width="14" height="14" viewBox="0 0 14 14"><path d="M4.500 1v9H14" fill="none" stroke="#aaa"/></svg>
    <svg class="ms-auto" width="15" height="14" viewBox="0 0 15 14"><path d="M.5 1.500h14v12H.5z" fill="#666" stroke="#ccc"/><path d="M3 5l3 2-3 3zM9 4h4v4z" fill="#eee"/></svg>
    <svg width="8" height="14" viewBox="0 0 8 14"><path d="M0 2h8M0 7h8M0 12h8" stroke="#ddd" stroke-width="2"/></svg>
  </div>
</footer>

<svg class="position-fixed brand" viewBox="1047 629 355 178" role="img" aria-label="土木工程网 www.civilcn.com">
  <path d="M1085 715Q1105 683 1141 680Q1173 680 1173 704Q1173 710 1169 714Q1170 688 1143 687Q1113 686 1085 715z" fill="#94c223"/>
  <path d="M1082 722Q1080 743 1110 747Q1152 745 1173 713Q1172 730 1150 745Q1130 758 1108 758Q1079 757 1080 732Q1080 727 1082 722z" fill="#143e94"/>
  <path d="M1085 727l14-7v22q-9-3-14-15z" fill="#143e94"/>
  <path d="M1101 720l5 2v21l-5-1zM1126 693l16 7v9l-10 4v28l-6 2zM1149 711l14 7-14 14z" fill="#d3d5da"/>
  <path d="M1108 699l16-7v51h-16z" fill="url(#tower)"/>
  <path d="M1134 716l14-6v24l-14 6z" fill="#143e94"/>
  <text x="1173" y="725" font-size="39" font-weight="900" font-style="italic" fill="#111" style="font-family:'Noto Sans CJK SC',sans-serif">土木工程网</text>
  <text x="1174" y="748" font-size="25" font-weight="600" font-style="italic" fill="#111">www.civilcn.com</text>
</svg>
<script src="https://cdn.jsdelivr.net/npm/bootstrap@5.3.0/dist/js/bootstrap.bundle.min.js"></script>
</body>
</html>
